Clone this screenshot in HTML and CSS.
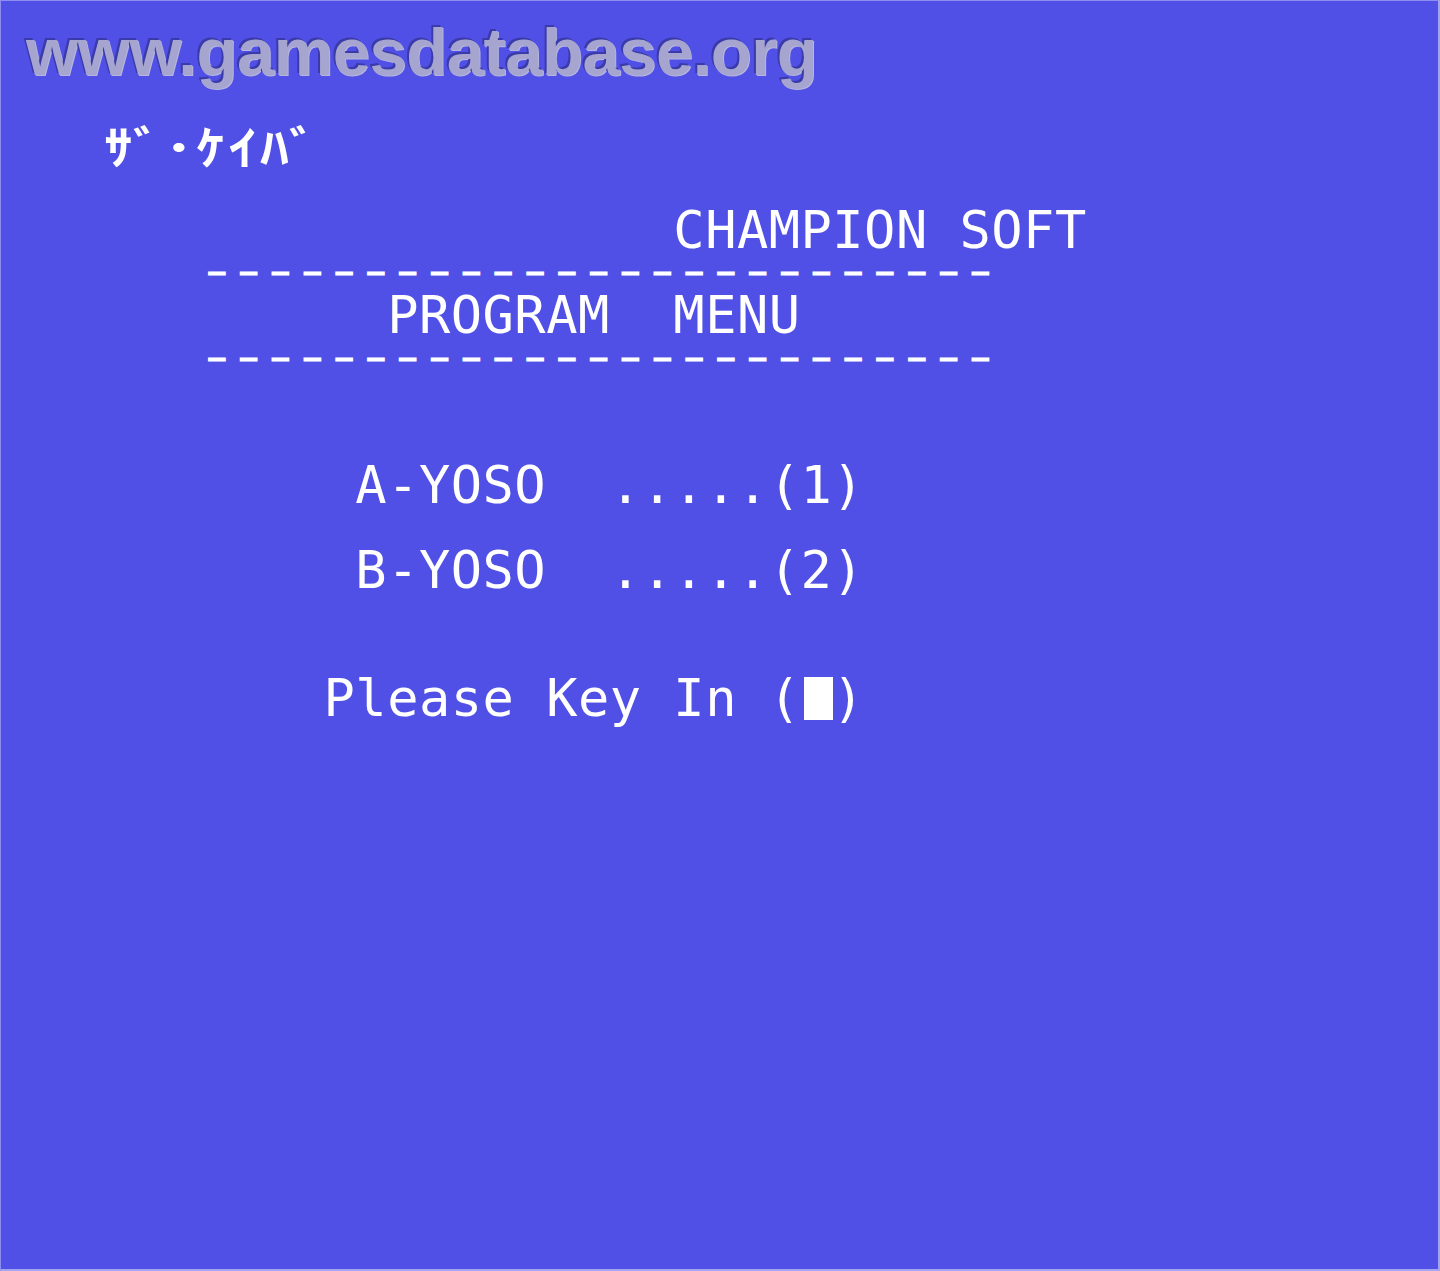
FILE: index.html
```html
<!DOCTYPE html>
<html lang="ja">
<head>
<meta charset="utf-8">
<title>ｻﾞ･ｹｲﾊﾞ - PROGRAM MENU</title>
<link rel="stylesheet" href="styles.css">
</head>
<body>
<div class="frame">
  <div class="watermark">www.gamesdatabase.org</div>
  <main class="screen">
    <div class="row"><span class="kana">ｻﾞ･ｹｲﾊﾞ</span></div>
    <div class="row"></div>
    <div class="row">                  CHAMPION SOFT</div>
    <div class="row">   <span class="dashes">-------------------------</span></div>
    <div class="row">         PROGRAM  MENU</div>
    <div class="row">   <span class="dashes">-------------------------</span></div>
    <div class="row"></div>
    <div class="row"></div>
    <div class="row">        A-YOSO  .....(1)</div>
    <div class="row"></div>
    <div class="row">        B-YOSO  .....(2)</div>
    <div class="row"></div>
    <div class="row"></div>
    <div class="row">       Please Key In (<span class="cursor"></span>)</div>
  </main>
</div>
</body>
</html>
```
FILE: styles.css
```css
html, body {
  margin: 0;
  padding: 0;
  background: #5050e6;
}

.frame {
  position: relative;
  box-sizing: border-box;
  width: 1440px;
  height: 1271px;
  background: #5050e6;
  border: 1px solid #8e8ef0;
  border-right: 2px solid #a4a4f0;
  border-bottom: 2px solid #a4a4f0;
  overflow: hidden;
}

.watermark {
  position: absolute;
  left: 25px;
  top: 17px;
  font-family: "Liberation Sans", Arial, sans-serif;
  font-weight: 700;
  font-size: 67px;
  line-height: 67px;
  letter-spacing: -0.5px;
  color: #a5a5d0;
  text-shadow: -2px -2px 0.5px #3a3aa8, 1px 1px 0.5px #b5b5e0;
  white-space: nowrap;
}

.screen {
  padding: 122.4px 0 0 100px;
}

.row {
  height: 42.6px;
  line-height: 42.6px;
  white-space: pre;
  font-family: "DejaVu Sans Mono", "Liberation Mono", monospace;
  font-size: 52px;
  letter-spacing: 0.49px;
  color: #ffffff;
}

.kana {
  display: inline-block;
  font-family: "Noto Sans CJK JP", "Noto Sans CJK SC", sans-serif;
  font-weight: 700;
  font-size: 46px;
  letter-spacing: 2.44px;
  margin-left: 3px;
  transform-origin: left center;
  transform: scaleX(1.25);
}

.dashes {
  display: inline-block;
  font-size: 22px;
  font-weight: 700;
  line-height: 22px;
  vertical-align: 9.7px;
  letter-spacing: 0.71px;
  -webkit-text-stroke: 1px #ffffff;
  transform-origin: left center;
  transform: translateX(5.7px) scaleX(2.28);
}

.cursor {
  display: inline-block;
  vertical-align: top;
  width: 29px;
  height: 42.6px;
  margin-left: 3px;
  background: #ffffff;
}
```
